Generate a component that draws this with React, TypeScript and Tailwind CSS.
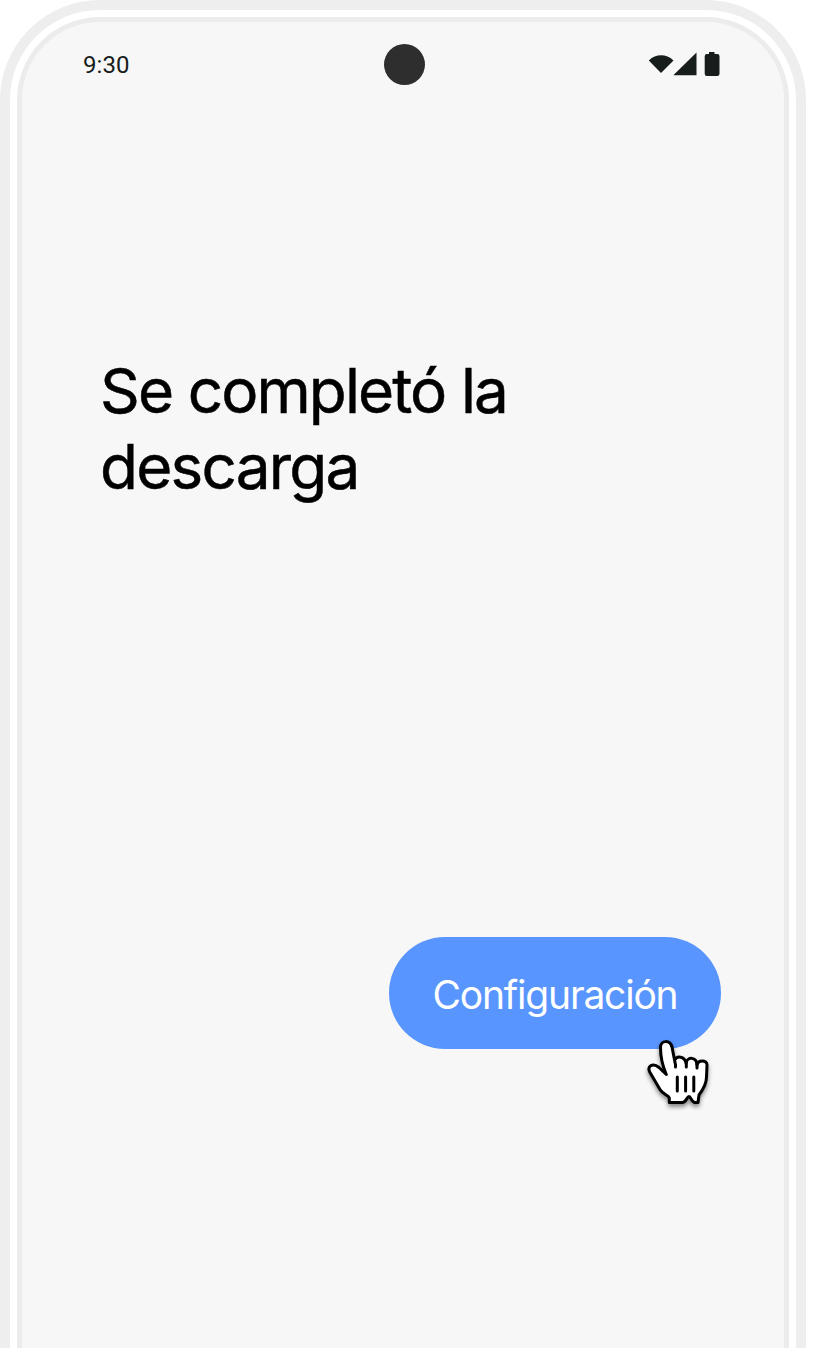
function StatusBar() {
  return (
    <header className="grid h-[84px] grid-cols-3 items-center pl-[60px] pr-[64px]">
      <span className="pl-px pt-px font-[Roboto,sans-serif] text-[24px] leading-none tracking-[0.1px] text-[#171d1b]">9:30</span>
      <span className="ml-[7px] size-[41px] justify-self-center rounded-full bg-[#2e2e2e]" />
      <svg className="h-7 w-[72px] justify-self-end" viewBox="0 0 72 28" fill="#171d1b">
        <path d="M0.8 10.4C8 3.6 18 3.6 25.5 10.4L13 22.9Z" />
        <path d="M25.8 25.2V24.8L48.5 2.5V25.2Z" />
        <path d="M61 2H66.5V4H69.3Q71.5 4 71.5 6.2V23.8Q71.5 26 69.3 26H58.9Q56.7 26 56.7 23.8V6.2Q56.7 4 58.9 4H61Z" />
      </svg>
    </header>
  );
}

function HandCursor() {
  return (
    <svg
      className="absolute left-[257px] top-[101px] h-[74px] w-[70px] overflow-visible drop-shadow-[0_3px_2px_rgba(0,0,0,0.45)]"
      viewBox="0 0 70 74"
      fill="white"
      stroke="black"
      strokeWidth="3"
      strokeLinejoin="round"
      strokeLinecap="round"
    >
      <path d="M29.5 27L26 9C24 1.5 14.5 2 14.5 9.5C14.5 17 17 29 20.3 36.5L13 29.5C7 24.5 0.5 28 4 34.5L14 51.5C16.5 56 23 57.5 23.3 60V64.5H36.5C40 64.5 41 58.5 43 58.5C45 58.5 45.5 64.5 49 64.5H52L53 57C57.5 51 60.5 46 60.5 39L61 27C61 21.5 52 21.5 51 27C50.5 18.5 41.5 18.5 40 25C38.5 18 31 17.5 28.7 22" />
      <path d="M29.5 27V29M40.3 24V29M51 25V30M31.3 39V53M39.6 39V53M47.8 39V53" fill="none" />
    </svg>
  );
}

export default function App() {
  return (
    <main className="h-[1348px] w-[814px] overflow-hidden bg-white">
      <div className="h-[1500px] w-[806px] rounded-t-[100px] border-[10px] border-[#eeeeee] bg-white p-[7px]">
        <section className="flex h-full flex-col rounded-t-[83px] border-[5px] border-[#ececec] bg-[#f7f7f7]">
          <StatusBar />
          <h1 className="mt-[247px] pl-[78px] font-[Inter,sans-serif] text-[62px] font-normal leading-[76px] tracking-[-1.9px] text-black [-webkit-text-stroke:0.5px_black]">
            Se completó la<br /><span className="tracking-[-1.8px]">descarga</span>
          </h1>
          <div className="relative mr-[63px] mt-[432px] h-[112px] w-[332px] self-end">
            <button className="flex size-full items-center justify-center rounded-full bg-[#5995fe] pt-1 font-[Inter,sans-serif] text-[39px] font-normal tracking-[-1.2px] text-white">
              Configuración
            </button>
            <HandCursor />
          </div>
        </section>
      </div>
    </main>
  );
}
